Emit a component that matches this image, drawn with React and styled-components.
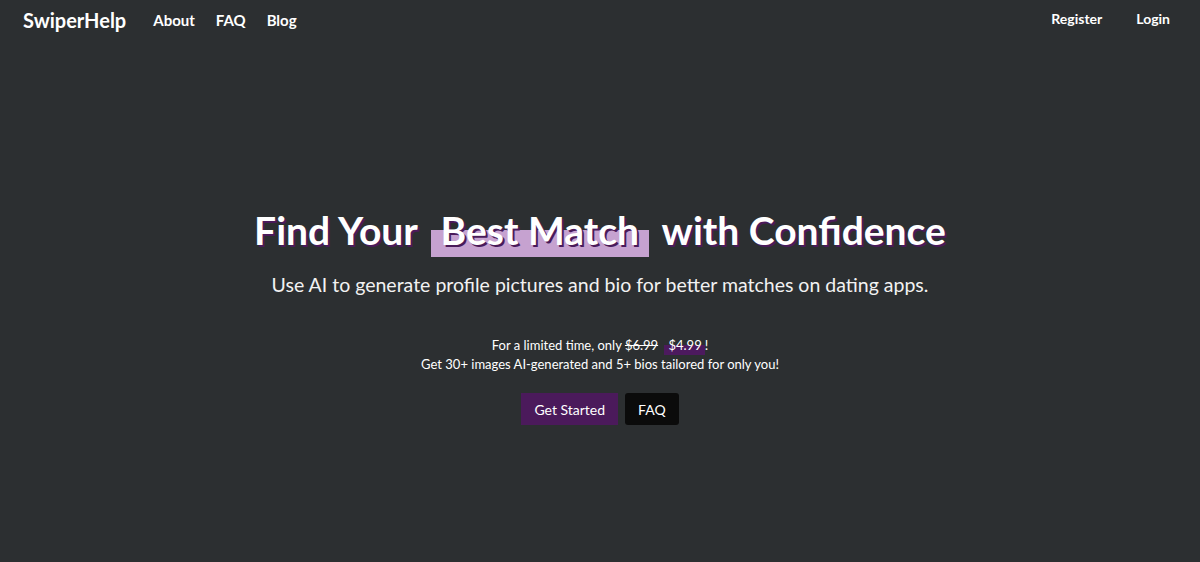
import React from 'react'
import styled, { createGlobalStyle } from 'styled-components'

const GlobalStyle = createGlobalStyle`
  html, body {
    margin: 0;
    padding: 0;
    background: #2c2f31;
  }
  body {
    font-family: 'Lato', 'Noto Sans', sans-serif;
    color: #fff;
  }
  * { box-sizing: border-box; }
`

const Page = styled.div`
  min-height: 100vh;
  background: #2c2f31;
  display: flex;
  flex-direction: column;
`

const Nav = styled.nav`
  height: 40px;
  padding: 0 30px 0 23px;
  display: flex;
  align-items: center;
  justify-content: space-between;
`

const NavLeft = styled.div`
  display: flex;
  align-items: center;
`

const Brand = styled.a`
  font-size: 20px;
  font-weight: 700;
  color: #fff;
  text-decoration: none;
  margin-right: 27px;
`

const Links = styled.div`
  display: flex;
  gap: 21px;
`

const NavLink = styled.a`
  font-size: ${p => p.$size || 15}px;
  font-weight: 700;
  color: #fff;
  text-decoration: none;
`

const NavRight = styled.div`
  display: flex;
  align-items: center;
  gap: 34px;
  margin-top: -3px;
`

const Hero = styled.section`
  display: flex;
  flex-direction: column;
  align-items: center;
  text-align: center;
  padding-top: 163px;
`

const Title = styled.h1`
  margin: 0;
  font-size: 39px;
  font-weight: 700;
  line-height: 54px;
  color: #fff;
  text-shadow: 2px 2px 0 #4a1a5a;
`

const Highlight = styled.span`
  display: inline-block;
  padding: 0 10px;
  margin: 0 4px;
  background: linear-gradient(to bottom, transparent 0 27px, #c6a2d0 27px 54px);
`

const Subtitle = styled.p`
  margin: 16px 0 0;
  font-size: 19.5px;
  font-weight: 400;
  color: #f2f2f2;
`

const Offer = styled.div`
  margin-top: 40px;
  font-size: 13px;
  line-height: 19px;
  color: #fff;
`

const OldPrice = styled.s`
  color: #fff;
`

const NewPrice = styled.span`
  display: inline-block;
  padding: 0 3px 0 4px;
  margin-left: 3px;
  background: linear-gradient(to bottom, transparent 0 9px, #4c1a5e 9px 19px);
`

const Actions = styled.div`
  margin-top: 19px;
  display: flex;
  gap: 7px;
`

const Button = styled.a`
  display: inline-flex;
  align-items: center;
  justify-content: center;
  height: 32px;
  padding: 0 13px;
  font-size: 14px;
  color: #fff;
  text-decoration: none;
  border-radius: ${p => (p.$dark ? '3px' : '0')};
  background: ${p => (p.$dark ? '#0b0b0b' : '#4b1a5b')};
`

export default function App() {
  return (
    <Page>
      <GlobalStyle />
      <Nav>
        <NavLeft>
          <Brand href="#">SwiperHelp</Brand>
          <Links>
            <NavLink href="#">About</NavLink>
            <NavLink href="#">FAQ</NavLink>
            <NavLink href="#">Blog</NavLink>
          </Links>
        </NavLeft>
        <NavRight>
          <NavLink href="#" $size={14}>Register</NavLink>
          <NavLink href="#" $size={14}>Login</NavLink>
        </NavRight>
      </Nav>
      <Hero>
        <Title>
          Find Your <Highlight>Best Match</Highlight> with Confidence
        </Title>
        <Subtitle>Use AI to generate profile pictures and bio for better matches on dating apps.</Subtitle>
        <Offer>
          For a limited time, only <OldPrice>$6.99</OldPrice> <NewPrice>$4.99</NewPrice>!
          <br />
          Get 30+ images AI-generated and 5+ bios tailored for only you!
        </Offer>
        <Actions>
          <Button href="#">Get Started</Button>
          <Button href="#" $dark>FAQ</Button>
        </Actions>
      </Hero>
    </Page>
  )
}
